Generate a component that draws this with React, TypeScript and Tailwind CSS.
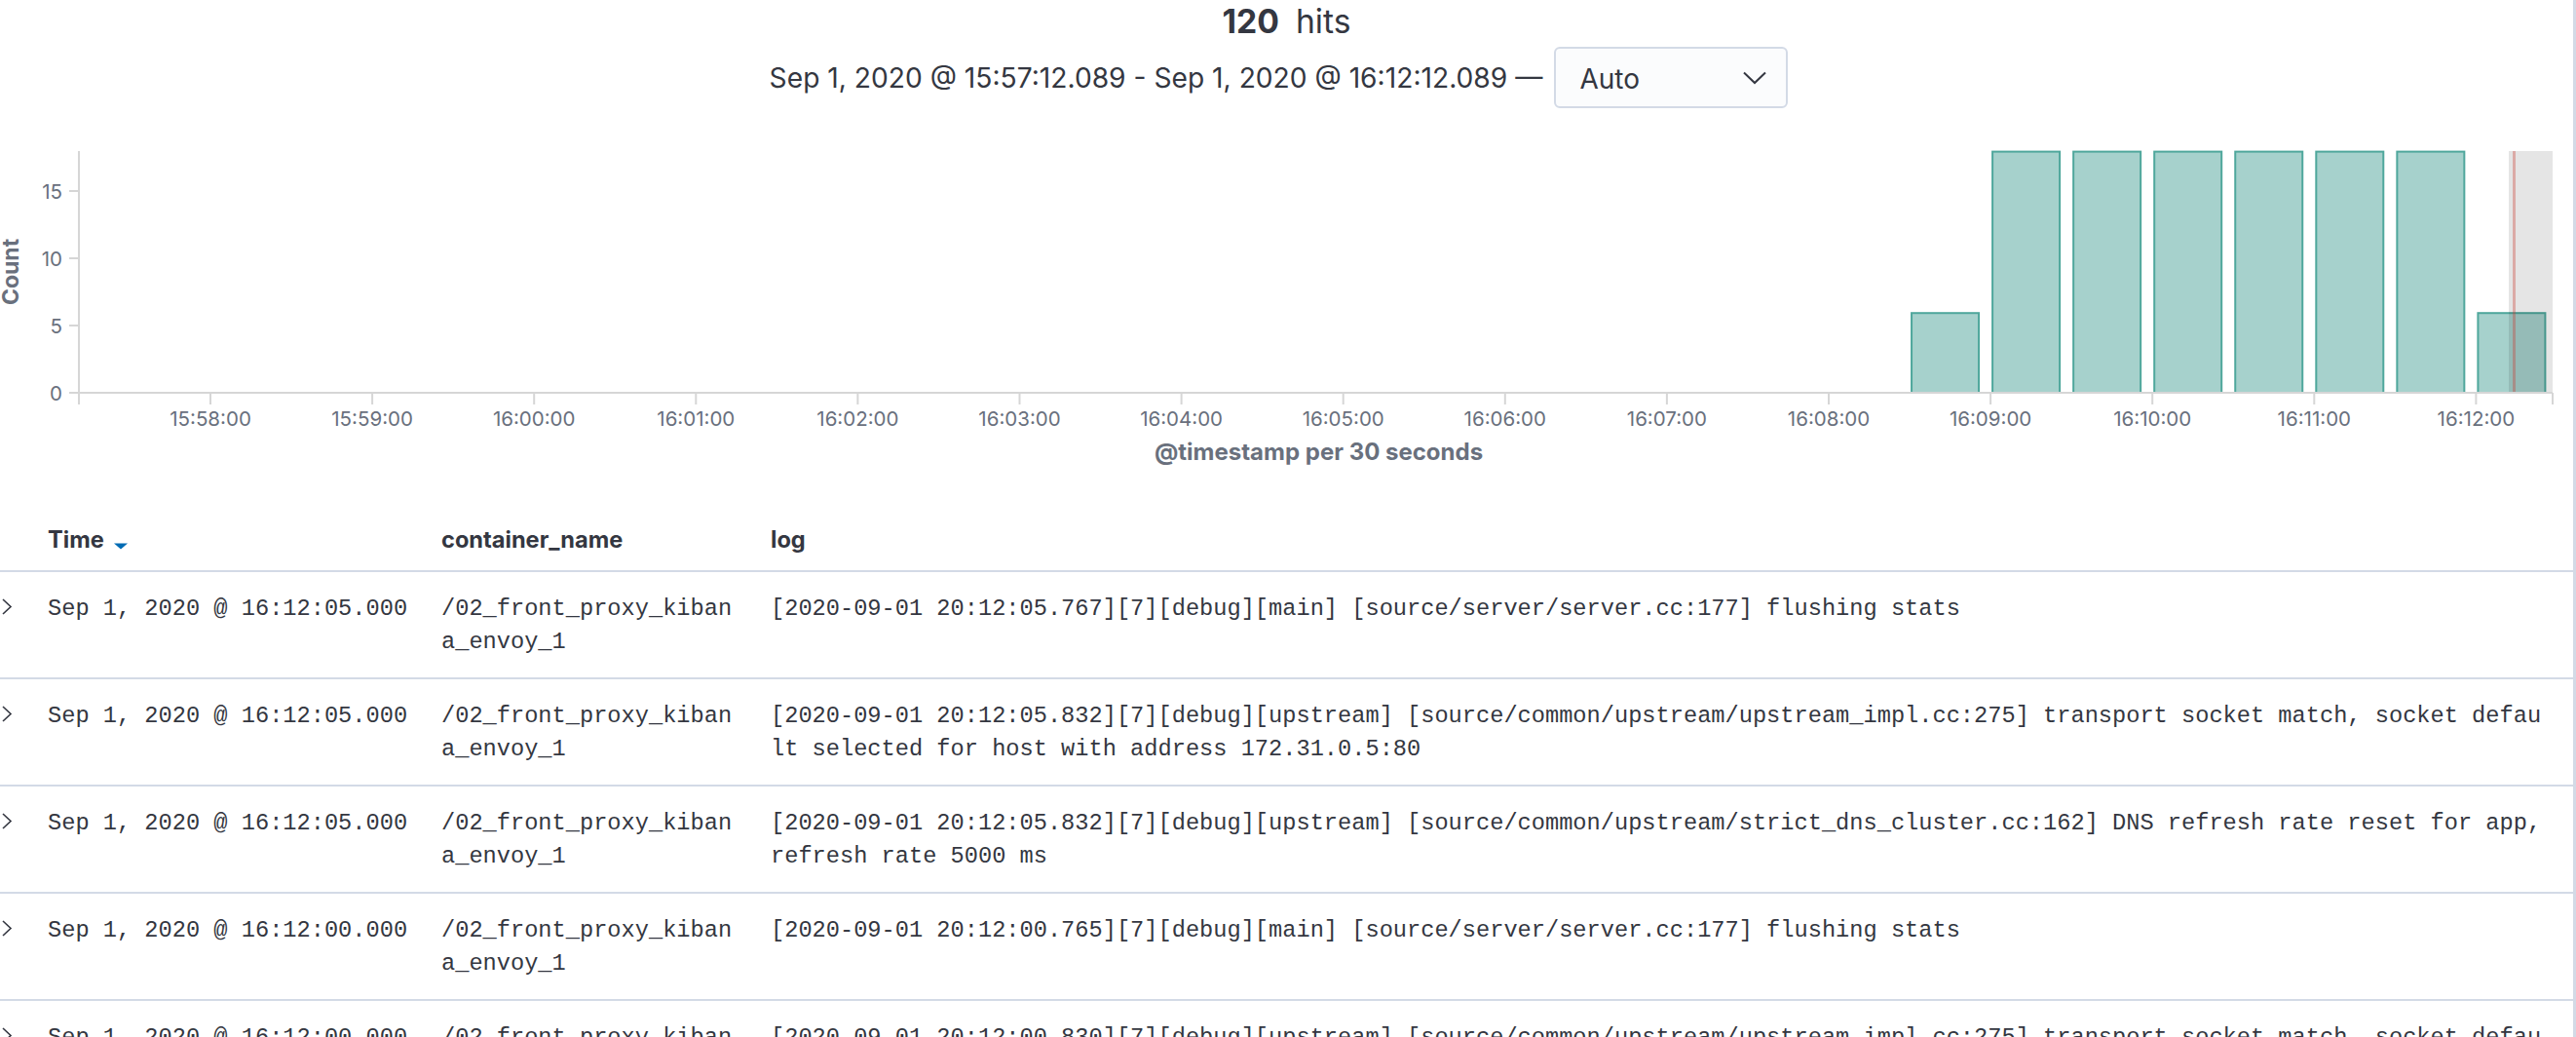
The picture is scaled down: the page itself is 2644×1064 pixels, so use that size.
import React from 'react';

interface LogRow {
    id: number;
    time: string;
    container: string;
    log: string;
}

const rows: LogRow[] = [
    {
        id: 1,
        time: 'Sep 1, 2020 @ 16:12:05.000',
        container: '/02_front_proxy_kibana_envoy_1',
        log: '[2020-09-01 20:12:05.767][7][debug][main] [source/server/server.cc:177] flushing stats',
    },
    {
        id: 2,
        time: 'Sep 1, 2020 @ 16:12:05.000',
        container: '/02_front_proxy_kibana_envoy_1',
        log: '[2020-09-01 20:12:05.832][7][debug][upstream] [source/common/upstream/upstream_impl.cc:275] transport socket match, socket default selected for host with address 172.31.0.5:80',
    },
    {
        id: 3,
        time: 'Sep 1, 2020 @ 16:12:05.000',
        container: '/02_front_proxy_kibana_envoy_1',
        log: '[2020-09-01 20:12:05.832][7][debug][upstream] [source/common/upstream/strict_dns_cluster.cc:162] DNS refresh rate reset for app, refresh rate 5000 ms',
    },
    {
        id: 4,
        time: 'Sep 1, 2020 @ 16:12:00.000',
        container: '/02_front_proxy_kibana_envoy_1',
        log: '[2020-09-01 20:12:00.765][7][debug][main] [source/server/server.cc:177] flushing stats',
    },
    {
        id: 5,
        time: 'Sep 1, 2020 @ 16:12:00.000',
        container: '/02_front_proxy_kibana_envoy_1',
        log: '[2020-09-01 20:12:00.830][7][debug][upstream] [source/common/upstream/upstream_impl.cc:275] transport socket match, socket default selected for host with address 172.31.0.5:80',
    },
];

// chart geometry, in page pixels
const X0 = 216; // 15:58:00
const PER_MIN = 166.1;
const ZERO_Y = 403;
const PER_UNIT = 13.8;
const AXIS_LEFT = 81;
const AXIS_RIGHT = 2620;

const tickLabels = [
    '15:58:00', '15:59:00', '16:00:00', '16:01:00', '16:02:00', '16:03:00', '16:04:00', '16:05:00',
    '16:06:00', '16:07:00', '16:08:00', '16:09:00', '16:10:00', '16:11:00', '16:12:00',
];

// counts per 30s bucket, starting at 16:08:30
const buckets = [6, 18, 18, 18, 18, 18, 18, 6];

function Histogram() {
    return (
        <svg width={2640} height={389} viewBox="0 111 2640 389" className="block">
            {/* bars */}
            {buckets.map((v, i) => {
                const x = X0 + (21 + i) * (PER_MIN / 2);
                const h = v * PER_UNIT;
                return (
                    <rect
                        key={i}
                        x={x + 2}
                        y={ZERO_Y - h + 1}
                        width={69}
                        height={h - 1}
                        fill="#a6d1cc"
                        stroke="#4fa79c"
                        strokeWidth={2}
                    />
                );
            })}

            {/* out of range area + now marker */}
            <rect x={2575} y={155} width={AXIS_RIGHT - 2575} height={ZERO_Y - 155} fill="rgba(0,0,0,0.1)" />
            <rect x={2579} y={155} width={3} height={ZERO_Y - 155} fill="rgba(200,60,50,0.35)" />

            {/* y axis */}
            <line x1={AXIS_LEFT} y1={155} x2={AXIS_LEFT} y2={415} stroke="#d6d6d6" strokeWidth={2} />
            {[0, 5, 10, 15].map((v) => {
                const y = ZERO_Y - v * PER_UNIT;
                return (
                    <g key={v}>
                        <line x1={71} y1={y} x2={AXIS_LEFT} y2={y} stroke="#d6d6d6" strokeWidth={2} />
                        <text x={64} y={y + 7.5} textAnchor="end" fontFamily="Inter, sans-serif" fontSize={20.5} fill="#69707d">
                            {v}
                        </text>
                    </g>
                );
            })}
            <text
                x={0}
                y={0}
                transform="translate(19 279) rotate(-90)"
                textAnchor="middle"
                fontFamily="Inter, sans-serif"
                fontWeight={700}
                fontSize={23}
                fill="#69707d"
            >
                Count
            </text>

            {/* x axis */}
            <line x1={AXIS_LEFT} y1={ZERO_Y} x2={AXIS_RIGHT} y2={ZERO_Y} stroke="#d6d6d6" strokeWidth={2} />
            <line x1={AXIS_RIGHT} y1={ZERO_Y} x2={AXIS_RIGHT} y2={415} stroke="#d6d6d6" strokeWidth={2} />
            {tickLabels.map((label, i) => {
                const x = X0 + i * PER_MIN;
                return (
                    <g key={label}>
                        <line x1={x} y1={ZERO_Y} x2={x} y2={415} stroke="#d6d6d6" strokeWidth={2} />
                        <text x={x} y={437} textAnchor="middle" fontFamily="Inter, sans-serif" fontSize={20.5} fill="#69707d">
                            {label}
                        </text>
                    </g>
                );
            })}
            <text
                x={(AXIS_LEFT + AXIS_RIGHT) / 2 + 3}
                y={472}
                textAnchor="middle"
                fontFamily="Inter, sans-serif"
                fontWeight={700}
                fontSize={24}
                fill="#69707d"
            >
                @timestamp per 30 seconds
            </text>
        </svg>
    );
}

function DocRow({ row }: { row: LogRow }) {
    return (
        <div className="flex h-[110px] border-b-2 border-[#d3dae6] pt-[21px] font-['Liberation_Mono',monospace] text-[23.66px] leading-[33.7px]">
            <div className="w-[49px] shrink-0">
                <svg width={16} height={34} className="block">
                    <polyline points="3,7 11,14.5 3,22" fill="none" stroke="#343741" strokeWidth={1.6} />
                </svg>
            </div>
            <div className="w-[404px] shrink-0 whitespace-nowrap">{row.time}</div>
            <div className="w-[338px] shrink-0">
                <div className="w-[305px] break-all">{row.container}</div>
            </div>
            <div className="w-[1824px] shrink-0 break-all">{row.log}</div>
        </div>
    );
}

export default function App() {
    return (
        <div className="h-screen w-full overflow-hidden bg-white border-r-[3px] border-[#d3dae6] font-['Inter',sans-serif] text-[#343741]">
            {/* Hits title */}
            <div className="h-[44px] flex items-center justify-center text-[33.7px] leading-[40px]">
                <span className="font-bold">120</span>
                <span className="ml-[17px]">hits</span>
            </div>

            {/* Time range + interval */}
            <div className="mt-[4px] h-[63px] flex items-center justify-center pr-[16px]">
                <span className="text-[28.2px] leading-[33px] mt-[1px] mr-[12px]">
                    Sep 1, 2020 @ 15:57:12.089 - Sep 1, 2020 @ 16:12:12.089 —
                </span>
                <div className="w-[240px] h-[63px] flex items-center justify-between border-2 border-[#d3dae6] rounded-[6px] bg-[#fbfcfd] pl-[24px] pr-[20px] text-[28px]">
                    <span className="mt-[2px]">Auto</span>
                    <svg width={24} height={14} className="block">
                        <polyline points="1,1.5 12,12 23,1.5" fill="none" stroke="#343741" strokeWidth={2} />
                    </svg>
                </div>
            </div>

            <Histogram />

            {/* Doc table */}
            <div className="flex pt-[37px] pb-[14px] border-b-2 border-[#d3dae6] text-[23.6px] leading-[33.7px] font-bold">
                <div className="w-[49px] shrink-0" />
                <div className="w-[404px] shrink-0 flex">
                    <span>Time</span>
                    <svg width={14} height={34} className="block ml-[10px]">
                        <polygon points="0,20.5 14,20.5 7,26.5" fill="#006bb4" />
                    </svg>
                </div>
                <div className="w-[338px] shrink-0">container_name</div>
                <div className="flex-1">log</div>
            </div>
            {rows.map((row) => (
                <DocRow key={row.id} row={row} />
            ))}
        </div>
    );
}
